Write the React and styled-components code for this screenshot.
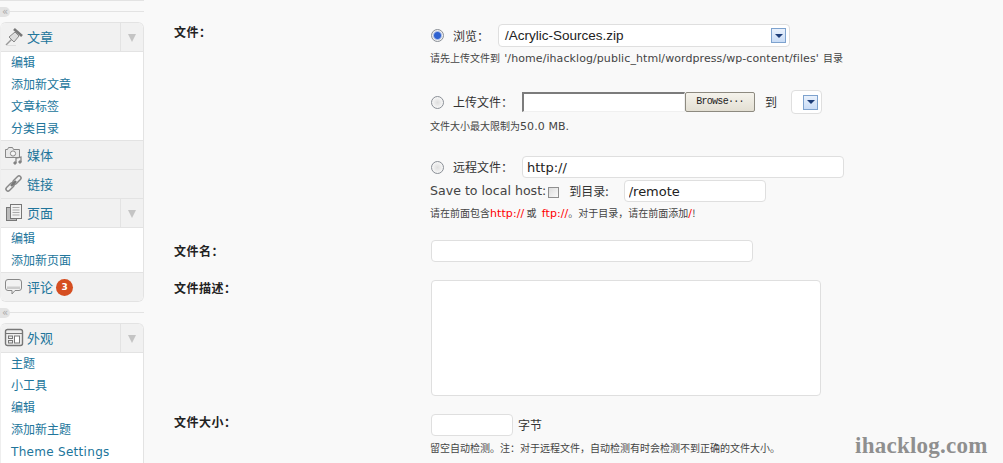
import styled, { createGlobalStyle } from 'styled-components'

const cjk = '"Noto Sans CJK SC", sans-serif'
const latin = '"DejaVu Sans", "Noto Sans CJK SC", sans-serif'

const Global = createGlobalStyle`
  html, body { margin: 0; padding: 0; background: #f9f9f9; }
  body { width: 1003px; height: 463px; overflow: hidden; font-family: ${latin}; }
`

const Page = styled.div`
  position: relative;
  display: flex;
  width: 1003px;
  height: 463px;
  overflow: hidden;
`

const Sidebar = styled.nav`
  width: 144px;
  flex: none;
  padding-top: 1px;
`

const TopEdge = styled.div`
  height: 1px;
  margin-top: -1px;
  background: #e3e3e3;
`

const Sep = styled.div`
  position: relative;
  height: 21px;
  &:before {
    content: '';
    display: block;
    position: relative;
    top: 10px;
    height: 1px;
    background: #e3e3e3;
  }
`

const Collapse = styled.span`
  position: absolute;
  left: 0;
  top: 6px;
  width: 10px;
  height: 10px;
  border-radius: 0 5px 5px 0;
  background: #e3e3e3;
  color: #aaa;
  font: 10px/9px "DejaVu Sans", sans-serif;
  text-align: center;
`

const Group = styled.div`
  border: 1px solid #e3e3e3;
  border-radius: 6px 6px ${({ open }) => (open ? '0 0' : '6px 6px')};
  border-left-color: #eee;
  overflow: hidden;
  background: #fff;
  ${({ open }) => open && 'border-bottom: 0;'}
`

const Head = styled.div`
  display: flex;
  align-items: center;
  height: 28px;
  background: #f1f1f1;
  border-bottom: 1px solid #e3e3e3;
  &:last-child { border-bottom: 0; }
`

const IconSlot = styled.span`
  width: 26px;
  flex: none;
  display: flex;
  justify-content: center;
  svg { display: block; }
`

const HeadLabel = styled.span`
  flex: 1;
  display: flex;
  align-items: center;
  gap: 3px;
  color: #21759b;
  font: 13px/28px ${cjk};
`

const Toggle = styled.span`
  width: 22px;
  height: 28px;
  border-left: 1px solid #e3e3e3;
  display: flex;
  align-items: center;
  justify-content: center;
  &:after {
    content: '';
    margin-top: 2px;
    border-style: solid;
    border-width: 8px 4px 0;
    border-color: #c4c4c4 transparent transparent;
  }
`

const Badge = styled.span`
  width: 17px;
  height: 17px;
  border-radius: 50%;
  background: #d54e21;
  color: #fff;
  font: bold 9px/17px "DejaVu Sans", sans-serif;
  text-align: center;
`

const Items = styled.ul`
  list-style: none;
  margin: 0;
  padding: 0;
  background: #fff;
  border-bottom: 1px solid #e3e3e3;
  &:last-child { border-bottom: 0; }
`

const Item = styled.li`
  height: 22px;
  padding-left: 10px;
  color: #21759b;
  font: 12px/23px ${latin};
  letter-spacing: ${({ wide }) => (wide ? '.3px' : '0')};
  white-space: nowrap;
`

const Main = styled.main`
  flex: 1;
  padding: 24px 0 0 30px;
  display: grid;
  grid-template-columns: 256px 1fr;
  align-content: start;
`

const Label = styled.div`
  font: bold 12px/16px ${cjk};
  letter-spacing: .5px;
  color: #222;
  padding-top: ${({ top }) => top}px;
`

const Cell = styled.div`
  padding-top: ${({ top }) => top || 0}px;
  min-width: 0;
`

const Line = styled.div`
  display: flex;
  align-items: center;
  height: ${({ h }) => h}px;
  margin-top: ${({ mt }) => mt || 0}px;
  color: #333;
  font: 12px/16px ${cjk};
  white-space: nowrap;
`

const Radio = styled.input.attrs({ type: 'radio', name: 'src' })`
  appearance: none;
  width: 13px;
  height: 13px;
  margin: 0 9px 0 1px;
  border-radius: 50%;
  border: 1px solid #8a8f96;
  background: radial-gradient(circle at 50% 50%, #dedede, #f8f8f8 75%);
  flex: none;
  &:checked {
    background: radial-gradient(circle, #2f62d0 0 3px, #a8bce8 4px, #f0f0f0 5px);
  }
`

const RadioName = styled.span`
  width: ${({ w }) => w}px;
  flex: none;
  font: 12px/16px ${cjk};
  color: #333;
`

const Fake = styled.div`
  box-sizing: border-box;
  display: flex;
  align-items: center;
  width: ${({ w }) => w}px;
  height: ${({ h }) => h}px;
  padding: 0 3px 0 6px;
  background: #fff;
  border: 1px solid #dfdfdf;
  border-radius: 4px;
  color: #222;
  font: 13.5px/18px "Liberation Sans", sans-serif;
`

const FakeValue = styled.span`
  flex: 1;
`

const Arrow = styled.span`
  box-sizing: border-box;
  width: 15px;
  height: 15px;
  flex: none;
  border: 1px solid #7da2ce;
  background: linear-gradient(#e9f1fc, #c9dcf6);
  display: flex;
  align-items: center;
  justify-content: center;
  &:after {
    content: '';
    border-style: solid;
    border-width: 4px 4px 0;
    border-color: #1d3d78 transparent transparent;
  }
`

const Field = styled.input.attrs({ type: 'text' })`
  box-sizing: border-box;
  width: ${({ w }) => w}px;
  height: ${({ h }) => h || 22}px;
  margin: ${({ ml }) => `0 0 0 ${ml || 0}px`};
  padding: 0 4px;
  background: #fff;
  border: 1px solid #dfdfdf;
  border-radius: 4px;
  outline: none;
  color: #222;
  font: 13px/18px ${latin};
  display: block;
  flex: none;
`

const Area = styled.textarea`
  display: block;
  box-sizing: border-box;
  width: 390px;
  height: 116px;
  margin: 0 0 0 1px;
  background: #fff;
  border: 1px solid #dfdfdf;
  border-radius: 4px;
  outline: none;
  resize: none;
`

const FileBox = styled.input.attrs({ type: 'text' })`
  box-sizing: border-box;
  width: 163px;
  height: 20px;
  margin: 0;
  padding: 0;
  background: #fff;
  border-style: solid;
  border-width: 2px 1px 1px 2px;
  border-color: #7c7c7c #f0f0f0 #f0f0f0 #7c7c7c;
  outline: none;
  flex: none;
`

const BrowseBtn = styled.button`
  box-sizing: border-box;
  width: 70px;
  height: 20px;
  padding: 0;
  background: linear-gradient(#f5f3ec, #e3dfd3);
  border: 1px solid #8d8a80;
  border-radius: 2px;
  color: #222;
  font: 10px/16px "Liberation Mono", monospace;
  letter-spacing: -.7px;
  flex: none;
`

const Help = styled.div`
  margin-top: ${({ mt }) => mt || 0}px;
  height: 14px;
  color: #444;
  font: 10px/14px ${cjk};
  white-space: nowrap;
`

const Lat = styled.span`
  font: 11px/14px "DejaVu Sans", sans-serif;
  letter-spacing: .08px;
  margin-left: ${({ before }) => before || 0}px;
  margin-right: ${({ after }) => after || 0}px;
  color: ${({ red }) => (red ? '#f00' : 'inherit')};
`

const SaveLabel = styled.span`
  font: 12.6px/16px ${latin};
  color: #444;
`

const Check = styled.input.attrs({ type: 'checkbox' })`
  appearance: none;
  box-sizing: border-box;
  width: 11px;
  height: 11px;
  margin: 3px 10px 0 2px;
  border: 1px solid #8f8f8f;
  background: linear-gradient(135deg, #ddd, #fafafa);
  flex: none;
`

const Gap = styled.span`
  width: ${({ w }) => w}px;
  flex: none;
`

const Watermark = styled.div`
  position: absolute;
  left: 855px;
  top: 433px;
  color: #8f8f8f;
  font: bold 23px/26px "Liberation Serif", serif;
  letter-spacing: .25px;
`

const PinIcon = () => (
  <svg width="20" height="20" viewBox="0 0 20 20">
    <path d="M2 18l6-6" stroke="#999" strokeWidth="1.4" />
    <path d="M5 10l6-5 4 4-5 6z" fill="#ddd" stroke="#888" />
    <path d="M10 2l8 7" stroke="#777" strokeWidth="2.6" />
    <path d="M2 18.500h10" stroke="#ddd" />
  </svg>
)

const MediaIcon = () => (
  <svg width="20" height="20" viewBox="0 0 20 20" fill="none" stroke="#888">
    <path d="M1.500 4.500h2l1-2h4l1 2h6v8h-14z" fill="#e8e8e8" />
    <circle cx="9" cy="8.500" r="2.600" fill="#f6f6f6" />
    <path d="M12 18v-5l5-1v5" strokeWidth="1.300" />
    <circle cx="11" cy="18" r="1.200" fill="#777" />
    <circle cx="16" cy="17" r="1.200" fill="#777" />
  </svg>
)

const LinkIcon = () => (
  <svg width="20" height="20" viewBox="0 0 20 20" fill="none">
    <path d="M4 15l4-4M11 8l4-4" stroke="#888" strokeWidth="5.500" strokeLinecap="round" />
    <path d="M4 15l4-4M11 8l4-4" stroke="#eee" strokeWidth="2.600" strokeLinecap="round" />
    <path d="M7 12l5-5" stroke="#777" strokeWidth="2.400" />
  </svg>
)

const PageIcon = () => (
  <svg width="20" height="20" viewBox="0 0 20 20" fill="none" stroke="#777">
    <rect x="2.500" y="4.500" width="10" height="13" fill="#bbb" />
    <rect x="6.500" y="1.500" width="11" height="14" fill="#f2f2f2" />
    <path d="M8.500 4.500h7M8.500 7h7M8.500 9.500h7M8.500 12h7" stroke="#aaa" />
  </svg>
)

const CommentIcon = () => (
  <svg width="20" height="20" viewBox="0 0 20 20">
    <path d="M4 2.500h11q2.500 0 2.500 2.500v6q0 2.500-2.500 2.500h-4l-3 3.500v-3.500h-4q-2.500 0-2.500-2.500v-6q0-2.500 2.500-2.500z" fill="#f2f2f2" stroke="#888" />
    <path d="M3 9.500h13v2.500h-13z" fill="#ccc" />
  </svg>
)

const LayoutIcon = () => (
  <svg width="20" height="20" viewBox="0 0 20 20" fill="none" stroke="#777">
    <rect x="1.500" y="1.500" width="17" height="16" rx="2" fill="#eee" strokeWidth="1.400" />
    <path d="M2 5.500h16" />
    <rect x="4.500" y="8" width="4" height="2.500" />
    <rect x="4.500" y="12.500" width="4" height="2.500" />
    <rect x="10.500" y="8" width="5" height="7" fill="#fff" />
  </svg>
)

const MenuHead = ({ icon, label, toggle, badge }) => (
  <Head>
    <IconSlot>{icon}</IconSlot>
    <HeadLabel>
      {label}
      {badge && <Badge>{badge}</Badge>}
    </HeadLabel>
    {toggle && <Toggle />}
  </Head>
)

const MenuItems = ({ list }) => (
  <Items>
    {list.map(text => <Item key={text} wide={/^[A-Z]/.test(text)}>{text}</Item>)}
  </Items>
)

export default function App () {
  return (
    <Page>
      <Global />
      <Sidebar>
        <TopEdge />
        <Sep><Collapse>«</Collapse></Sep>
        <Group>
          <MenuHead icon={<PinIcon />} label="文章" toggle />
          <MenuItems list={['编辑', '添加新文章', '文章标签', '分类目录']} />
          <MenuHead icon={<MediaIcon />} label="媒体" />
          <MenuHead icon={<LinkIcon />} label="链接" />
          <MenuHead icon={<PageIcon />} label="页面" toggle />
          <MenuItems list={['编辑', '添加新页面']} />
          <MenuHead icon={<CommentIcon />} label="评论" badge="3" />
        </Group>
        <Sep><Collapse>«</Collapse></Sep>
        <Group open>
          <MenuHead icon={<LayoutIcon />} label="外观" toggle />
          <MenuItems list={['主题', '小工具', '编辑', '添加新主题', 'Theme Settings']} />
        </Group>
      </Sidebar>

      <Main>
        <Label top={0}>文件：</Label>
        <Cell>
          <Line h={23}>
            <Radio defaultChecked />
            <RadioName w={45}>浏览：</RadioName>
            <Fake w={292} h={23}>
              <FakeValue>/Acrylic-Sources.zip</FakeValue>
              <Arrow />
            </Fake>
          </Line>
          <Help mt={4}>请先上传文件到 <Lat before={2} after={2}>'/home/ihacklog/public_html/wordpress/wp-content/files'</Lat> 目录</Help>

          <Line h={24} mt={25}>
            <Radio />
            <RadioName w={69}>上传文件：</RadioName>
            <FileBox />
            <BrowseBtn>Browse···</BrowseBtn>
            <Gap w={10} />
            到
            <Gap w={14} />
            <Fake w={31} h={24}>
              <FakeValue />
              <Arrow />
            </Fake>
          </Line>
          <Help mt={5}>文件大小最大限制为<Lat>50.0 MB.</Lat></Help>

          <Line h={22} mt={23}>
            <Radio />
            <RadioName w={69}>远程文件：</RadioName>
            <Field w={322} defaultValue="http://" />
          </Line>
          <Line h={22} mt={2}>
            <SaveLabel>Save to local host:</SaveLabel>
            <Check />
            到目录:
            <Gap w={15} />
            <Field w={142} defaultValue="/remote" />
          </Line>
          <Help mt={4}>
            请在前面包含<Lat red>http://</Lat> 或 <Lat red before={3}>ftp://</Lat>。对于目录，请在前面添加<Lat red>/</Lat>!
          </Help>
        </Cell>

        <Label top={23}>文件名：</Label>
        <Cell top={20}>
          <Field w={322} ml={1} />
        </Cell>

        <Label top={18}>文件描述：</Label>
        <Cell top={18}>
          <Area />
        </Cell>

        <Label top={18}>文件大小：</Label>
        <Cell top={18}>
          <Line h={22}>
            <Field w={82} ml={1} />
            <Gap w={5} />
            字节
          </Line>
          <Help mt={5}>留空自动检测。注：对于远程文件，自动检测有时会检测不到正确的文件大小。</Help>
        </Cell>
      </Main>

      <Watermark>ihacklog.com</Watermark>
    </Page>
  )
}
